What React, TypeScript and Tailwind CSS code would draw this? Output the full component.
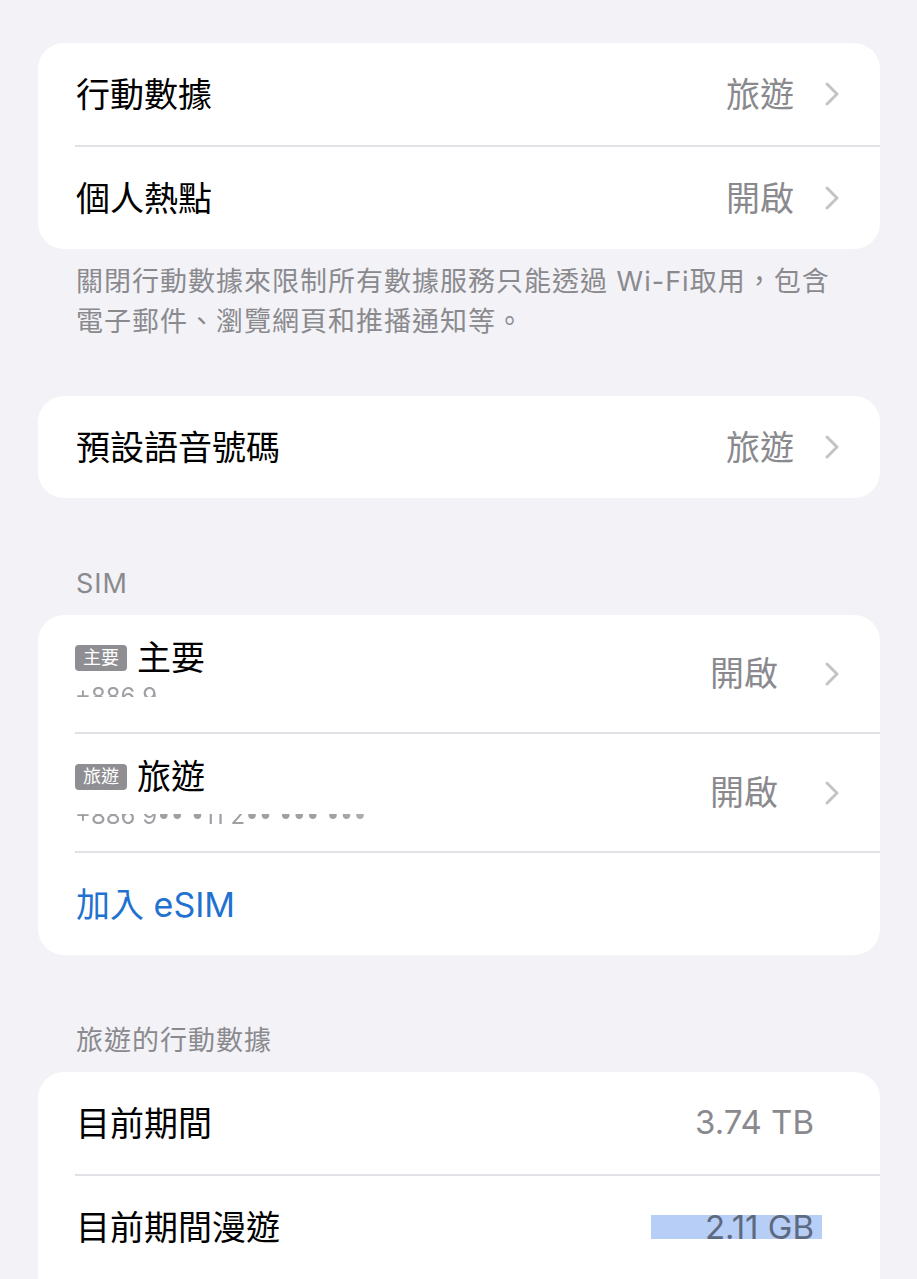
import type { ReactNode } from "react";

const font = { fontFamily: '"Inter", "Noto Sans CJK TC", sans-serif' };

function Chevron() {
  return (
    <svg width="16" height="26" viewBox="0 0 16 26" className="shrink-0">
      <path d="M3 3 L13 13 L3 23" fill="none" stroke="#c4c4c7" strokeWidth="3" strokeLinecap="round" strokeLinejoin="round" />
    </svg>
  );
}

function Separator() {
  return <div className="ml-[37px] h-[2px] bg-[#e2e2e6]" />;
}

function Card({ children }: { children: ReactNode }) {
  return <div className="overflow-hidden rounded-[26px] bg-white">{children}</div>;
}

function NavRow({ label, value }: { label: string; value: string }) {
  return (
    <div className="flex h-[102px] items-center pl-[38px] pr-[40px]">
      <span className="flex-1 text-[34px] text-black">{label}</span>
      <span className="mr-[30px] text-[34px] text-[#8a8a8e]">{value}</span>
      <Chevron />
    </div>
  );
}

function Header({ children }: { children: ReactNode }) {
  return <div className="mt-[68px] mb-[13px] pl-[38px] text-[27px] leading-[36px] tracking-[1px] text-[#8a8a8e]">{children}</div>;
}

function SimRow({ badge, label, phone, top }: { badge: string; label: string; phone: string; top: boolean }) {
  return (
    <div className="flex h-[117px] items-center pl-[37px] pr-[40px]">
      <div className="flex-1">
        <div className="flex items-center gap-[10px]">
          <span className="w-[52px] rounded-[4px] bg-[#8e8e93] text-center text-[18px] leading-[26px] text-white">{badge}</span>
          <span className="text-[34px] leading-[44px] text-black">{label}</span>
        </div>
        <div className="relative mt-[2px] h-[30px] overflow-hidden">
          <span className="block text-[24px] leading-[30px] text-[#a0a0a4] blur-[0.6px]">{phone}</span>
          {top ? (
            <div className="absolute inset-x-0 bottom-0 h-[15px] bg-white" />
          ) : (
            <div className="absolute inset-x-0 top-0 h-[13px] bg-white" />
          )}
          <div className="absolute inset-y-0 right-0 w-[60%] bg-gradient-to-r from-transparent via-white/80 to-white" />
        </div>
      </div>
      <span className="mr-[46px] text-[34px] text-[#8a8a8e]">開啟</span>
      <Chevron />
    </div>
  );
}

export default function App() {
  return (
    <div className="h-[1279px] w-[917px] overflow-hidden bg-[#f2f2f7] pt-[43px] pl-[38px] pr-[37px]" style={font}>
      <Card>
        <NavRow label="行動數據" value="旅遊" />
        <Separator />
        <NavRow label="個人熱點" value="開啟" />
      </Card>
      <p className="whitespace-nowrap pt-[13px] pl-[38px] text-[27px] leading-[40px] tracking-[1px] text-[#8a8a8e]">
        關閉行動數據來限制所有數據服務只能透過 Wi-Fi取用，包含
        <br />
        電子郵件、瀏覽網頁和推播通知等。
      </p>
      <div className="mt-[54px]">
        <Card>
          <NavRow label="預設語音號碼" value="旅遊" />
        </Card>
      </div>

      <Header>SIM</Header>
      <Card>
        <SimRow badge="主要" label="主要" phone="+886 9" top />
        <Separator />
        <SimRow badge="旅遊" label="旅遊" phone="+886 9•• •11 2•• ••• •••" top={false} />
        <Separator />
        <div className="flex h-[102px] items-center pl-[38px] text-[34px] text-[#1f72d0]">加入 eSIM</div>
      </Card>

      <Header>旅遊的行動數據</Header>
      <Card>
        <div className="flex h-[102px] items-center pl-[38px] pr-[66px]">
          <span className="flex-1 text-[34px] text-black">目前期間</span>
          <span className="text-[33px] text-[#8a8a8e]">3.74 TB</span>
        </div>
        <Separator />
        <div className="flex h-[102px] items-center pl-[38px] pr-[58px]">
          <span className="flex-1 text-[34px] text-black">目前期間漫遊</span>
          <span className="bg-[#b7cff6] pl-[54px] pr-[8px] text-[33px] leading-[24px] text-[#5d6a80]">2.11 GB</span>
        </div>
        <div className="h-[40px]" />
      </Card>
    </div>
  );
}
